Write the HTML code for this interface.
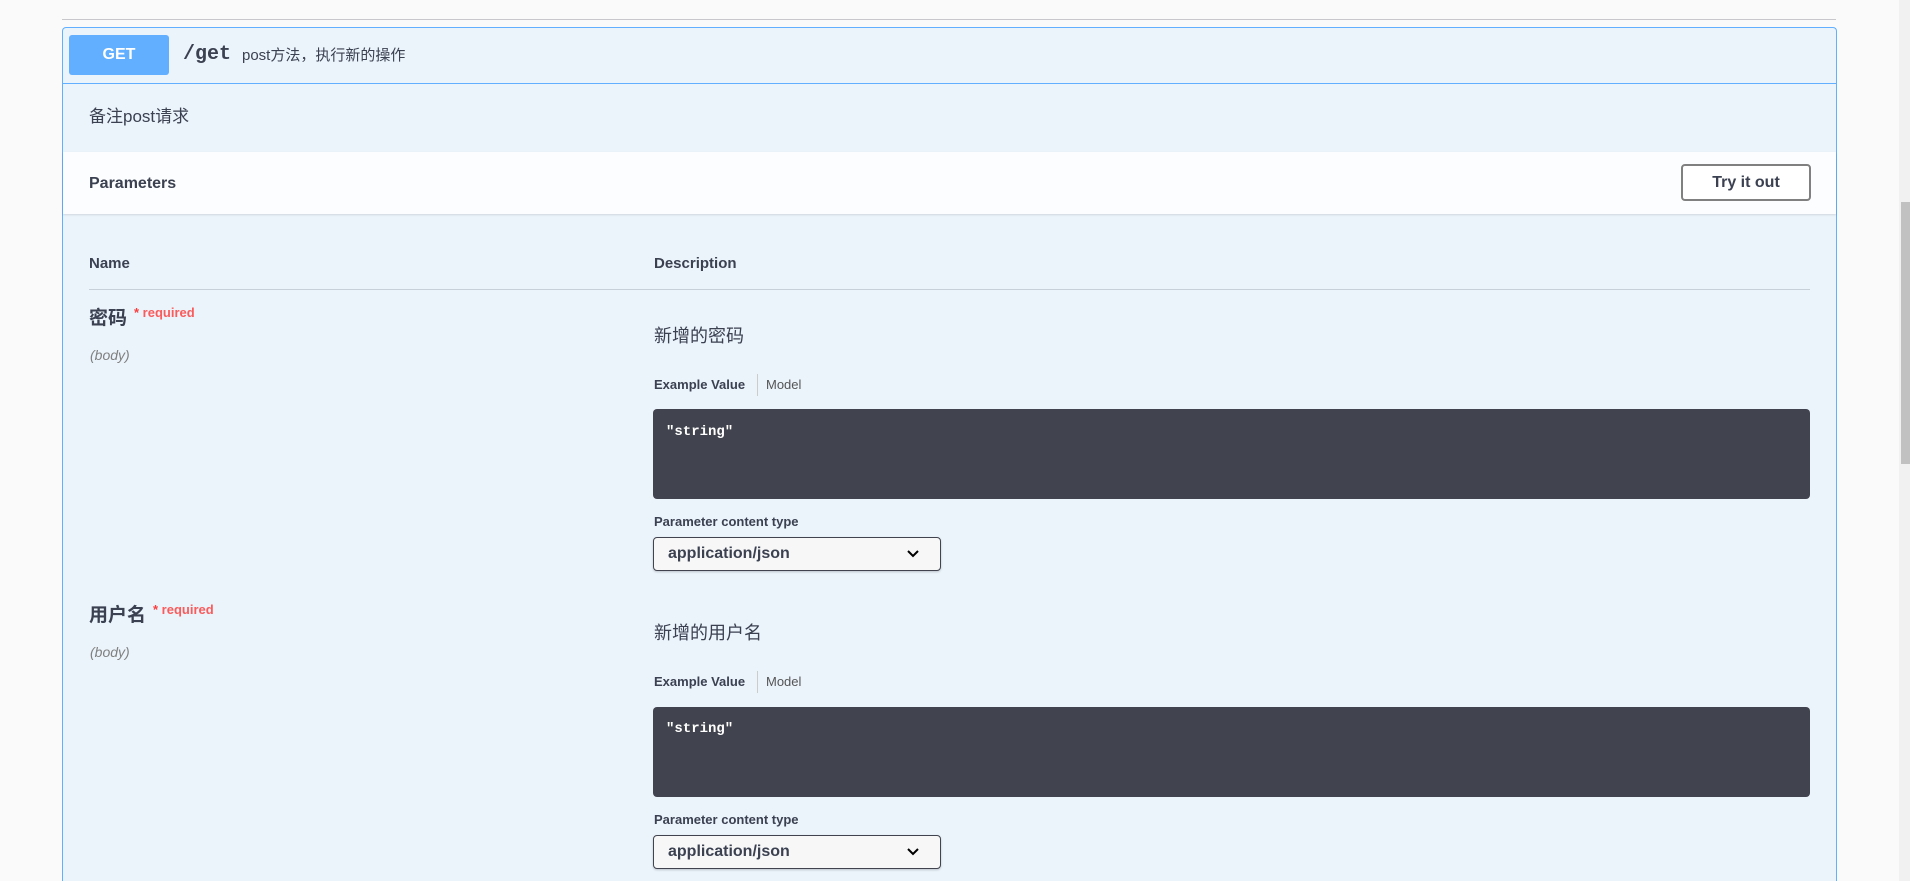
<!DOCTYPE html>
<html style="overflow:hidden;height:881px"><head><meta charset="utf-8"><style>
*{margin:0;padding:0;box-sizing:border-box}
body{width:1910px;height:881px;background:#fafafa;position:relative;overflow:hidden;font-family:"Liberation Sans","Noto Sans CJK SC",sans-serif;color:#3b4151}
.a{position:absolute;white-space:nowrap}
.b{font-weight:bold}
.mono{font-family:"Liberation Mono","DejaVu Sans Mono",monospace}
</style></head><body>
<div class="a" style="left:62px;top:19px;width:1774px;height:1px;background:#c8c8cc"></div>
<div class="a" style="left:62px;top:27px;width:1775px;height:854px;border:1px solid #61affe;border-bottom:none;border-radius:4px 4px 0 0;background:#ebf3fb"></div>
<div class="a" style="left:63px;top:83px;width:1773px;height:1px;background:#61affe"></div>
<div class="a b" style="left:69px;top:35px;width:100px;height:40px;background:#61affe;border-radius:3px;color:#fff;font-size:16px;line-height:40px;text-align:center">GET</div>
<div class="a mono b" style="left:183px;top:42px;font-size:20px;line-height:26px;color:#3b4151">/get</div>
<div class="a" style="left:242px;top:46px;font-size:15px;line-height:20px">post方法，执行新的操作</div>
<div class="a" style="left:89px;top:106px;font-size:17px;line-height:22px">备注post请求</div>
<div class="a" style="left:63px;top:152px;width:1773px;height:62px;background:#fcfdfe;box-shadow:0 1px 2px rgba(0,0,0,.12)"></div>
<div class="a b" style="left:89px;top:173px;font-size:16px;line-height:22px">Parameters</div>
<div class="a b" style="left:1681px;top:164px;width:130px;height:37px;border:2px solid #808080;border-radius:4px;font-size:16px;line-height:33px;text-align:center;background:#fff">Try it out</div>
<div class="a b" style="left:89px;top:255px;font-size:15px">Name</div>
<div class="a b" style="left:654px;top:255px;font-size:15px">Description</div>
<div class="a" style="left:89px;top:289px;width:1721px;height:1px;background:#c7cfd9"></div>

<div class="a b" style="left:89px;top:307px;font-size:19px;line-height:24px">密码</div>
<div class="a b" style="left:134px;top:305px;font-size:13px;color:#f93e3e">* <span style="color:#fb5b5b">required</span></div>
<div class="a" style="left:90px;top:347px;font-size:14px;font-style:italic;color:#808080">(body)</div>
<div class="a" style="left:654px;top:324px;font-size:18px;line-height:24px">新增的密码</div>
<div class="a b" style="left:654px;top:377px;font-size:13px">Example Value</div>
<div class="a" style="left:757px;top:374px;width:1px;height:22px;background:#ccc"></div>
<div class="a" style="left:766px;top:377px;font-size:13px;color:#555">Model</div>
<div class="a" style="left:653px;top:409px;width:1157px;height:90px;background:#41444e;border-radius:4px"></div>
<div class="a mono b" style="left:666px;top:424px;font-size:14px;color:#fff">"string"</div>
<div class="a b" style="left:654px;top:514px;font-size:13px">Parameter content type</div>
<div class="a b" style="left:653px;top:537px;width:288px;height:34px;border:1px solid #41444e;border-radius:4px;background:#f7f7f7;font-size:16px;line-height:32px;padding-left:14px;box-shadow:0 1px 2px rgba(0,0,0,.2)">application/json<svg style="position:absolute;right:20px;top:11px" width="14" height="10" viewBox="0 0 14 10"><path d="M2 2l5 5 5-5" fill="none" stroke="#000" stroke-width="2"/></svg></div>

<div class="a b" style="left:89px;top:604px;font-size:19px;line-height:24px">用户名</div>
<div class="a b" style="left:153px;top:602px;font-size:13px;color:#f93e3e">* <span style="color:#fb5b5b">required</span></div>
<div class="a" style="left:90px;top:644px;font-size:14px;font-style:italic;color:#808080">(body)</div>
<div class="a" style="left:654px;top:621px;font-size:18px;line-height:24px">新增的用户名</div>
<div class="a b" style="left:654px;top:674px;font-size:13px">Example Value</div>
<div class="a" style="left:757px;top:671px;width:1px;height:22px;background:#ccc"></div>
<div class="a" style="left:766px;top:674px;font-size:13px;color:#555">Model</div>
<div class="a" style="left:653px;top:707px;width:1157px;height:90px;background:#41444e;border-radius:4px"></div>
<div class="a mono b" style="left:666px;top:721px;font-size:14px;color:#fff">"string"</div>
<div class="a b" style="left:654px;top:812px;font-size:13px">Parameter content type</div>
<div class="a b" style="left:653px;top:835px;width:288px;height:34px;border:1px solid #41444e;border-radius:4px;background:#f7f7f7;font-size:16px;line-height:32px;padding-left:14px;box-shadow:0 1px 2px rgba(0,0,0,.2)">application/json<svg style="position:absolute;right:20px;top:11px" width="14" height="10" viewBox="0 0 14 10"><path d="M2 2l5 5 5-5" fill="none" stroke="#000" stroke-width="2"/></svg></div>

<div class="a" style="left:1899px;top:0;width:11px;height:881px;background:#f1f1f1"></div>
<div class="a" style="left:1901px;top:202px;width:9px;height:262px;background:#c1c1c1"></div>
</body></html>
